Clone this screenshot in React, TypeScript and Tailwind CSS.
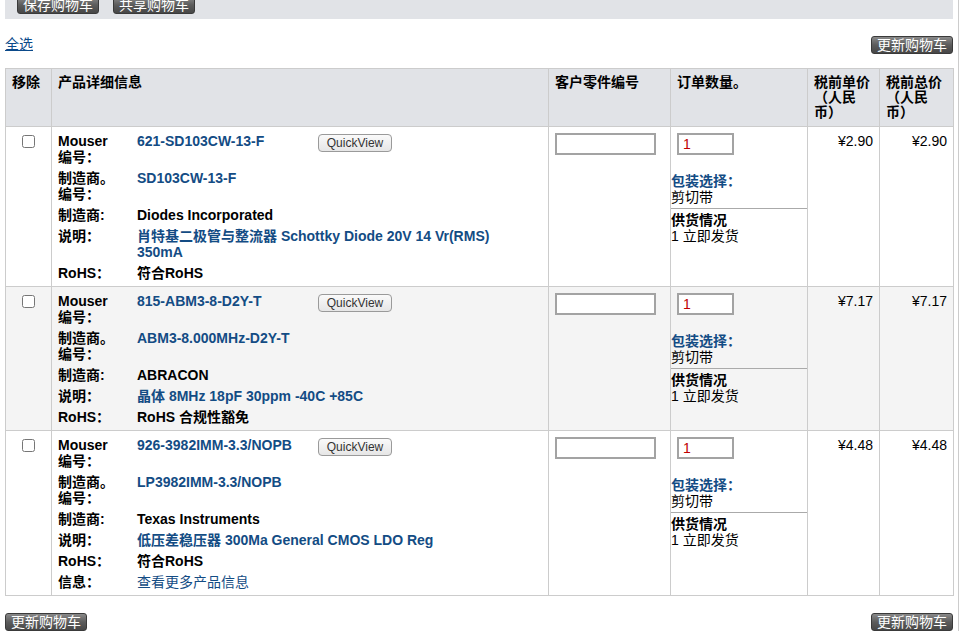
import type { ReactNode } from 'react';

type Item = { label: ReactNode; value: ReactNode; kind?: 'link' | 'plain' };

type Product = {
  id: string;
  mouser: string;
  mfrNo: string;
  mfr: string;
  desc: string;
  rohs: string;
  more?: boolean;
  price: string;
  shaded?: boolean;
};

const products: Product[] = [
  {
    id: 'a',
    mouser: '621-SD103CW-13-F',
    mfrNo: 'SD103CW-13-F',
    mfr: 'Diodes Incorporated',
    desc: '肖特基二极管与整流器 Schottky Diode 20V 14 Vr(RMS) 350mA',
    rohs: '符合RoHS',
    price: '¥2.90',
  },
  {
    id: 'b',
    mouser: '815-ABM3-8-D2Y-T',
    mfrNo: 'ABM3-8.000MHz-D2Y-T',
    mfr: 'ABRACON',
    desc: '晶体 8MHz 18pF 30ppm -40C +85C',
    rohs: 'RoHS 合规性豁免',
    price: '¥7.17',
    shaded: true,
  },
  {
    id: 'c',
    mouser: '926-3982IMM-3.3/NOPB',
    mfrNo: 'LP3982IMM-3.3/NOPB',
    mfr: 'Texas Instruments',
    desc: '低压差稳压器 300Ma General CMOS LDO Reg',
    rohs: '符合RoHS',
    more: true,
    price: '¥4.48',
  },
];

const font = "font-['Liberation_Sans','Noto_Sans_CJK_SC',sans-serif]";

function DarkButton({ children }: { children: ReactNode }) {
  return (
    <button className="h-[18px] w-[82px] rounded-[3px] border border-[#3a3a3a] bg-gradient-to-b from-[#8a8a8a] via-[#5c5c5c] to-[#474747] text-[14px] leading-[16px] text-white">
      {children}
    </button>
  );
}

function Detail({ label, value, kind }: Item) {
  const color = kind === 'link' ? 'text-[#134c84]' : 'text-black';
  return (
    <div className="flex">
      <div className="w-[79px] shrink-0 font-bold text-black">{label}</div>
      <div className={`w-[362px] font-bold ${color}`}>{value}</div>
    </div>
  );
}

function ProductRow({ p }: { p: Product }) {
  const bg = p.shaded ? 'bg-[#f4f4f4]' : 'bg-white';
  const td = 'border border-[#cccccc] align-top';
  return (
    <tr className={bg}>
      <td className={`${td} pt-[6px] text-center`}>
        <input type="checkbox" className="mt-[1px] h-[13px] w-[13px] accent-[#ddd]" />
      </td>
      <td className={`${td} px-[6px] pt-[6px] pb-[5px]`}>
        <div className="flex flex-col gap-[5px] text-[14px] leading-[16px]">
          <div className="flex">
            <div className="w-[79px] shrink-0 font-bold text-black">
              Mouser
              <br />
              编号：
            </div>
            <div className="w-[181px] font-bold text-[#134c84]">{p.mouser}</div>
            <button className="mt-[1px] h-[18px] w-[74px] rounded-[4px] border border-[#9a9a9a] bg-gradient-to-b from-[#fafafa] to-[#e6e6e6] text-[12px] leading-[14px] font-normal text-[#333]">
              QuickView
            </button>
          </div>
          <Detail
            label={
              <>
                制造商。
                <br />
                编号：
              </>
            }
            value={p.mfrNo}
            kind="link"
          />
          <Detail label="制造商:" value={p.mfr} />
          <Detail label="说明：" value={p.desc} kind="link" />
          <Detail label="RoHS：" value={p.rohs} />
          {p.more && (
            <div className="flex">
              <div className="w-[79px] shrink-0 font-bold text-black">信息：</div>
              <a className="font-normal text-[#134c84]">查看更多产品信息</a>
            </div>
          )}
        </div>
      </td>
      <td className={`${td} px-[6px] pt-[6px]`}>
        <input
          type="text"
          className="box-border h-[22px] w-[101px] border-2 border-[#a3a3a3] bg-white"
        />
      </td>
      <td className={`${td} pt-[6px]`}>
        <input
          type="text"
          defaultValue="1"
          className="ml-[6px] box-border h-[22px] w-[57px] border-2 border-[#a3a3a3] bg-white px-[4px] text-[14px] text-[#c00000]"
        />
        <div className="mt-[18px] text-[14px] leading-[16px]">
          <div className="font-bold text-[#134c84]">包装选择：</div>
          <div className="text-black">剪切带</div>
          <div className="mt-[3px] border-t border-[#aaaaaa] pt-[3px] font-bold text-black">
            供货情况
          </div>
          <div className="leading-[17px] text-black">1 立即发货</div>
        </div>
      </td>
      <td className={`${td} pr-[6px] pt-[6px] text-right text-[14px] leading-[16px] text-black`}>
        {p.price}
      </td>
      <td className={`${td} pr-[6px] pt-[6px] text-right text-[14px] leading-[16px] text-black`}>
        {p.price}
      </td>
    </tr>
  );
}

export default function App() {
  const th = 'border border-[#cccccc] px-[6px] pt-[6px] pb-[6px] text-left align-top font-bold';
  return (
    <div className={`${font} min-h-[631px] w-[959px] border-r border-[#cccccc] bg-white px-[5px] text-[14px] text-black`}>
      <div className="flex h-[19px] items-start gap-[14px] overflow-hidden bg-[#e1e3e7] pl-[12px]">
        <div className="-mt-[5px]">
          <DarkButton>保存购物车</DarkButton>
        </div>
        <div className="-mt-[5px]">
          <DarkButton>共享购物车</DarkButton>
        </div>
      </div>

      <div className="mt-[17px] flex h-[17px] items-center justify-between">
        <a className="text-[14px] leading-[17px] text-[#0b4a8a] underline">全选</a>
        <DarkButton>更新购物车</DarkButton>
      </div>

      <table className="mt-[15px] w-[948px] table-fixed border-collapse text-[14px]">
        <colgroup>
          <col className="w-[46px]" />
          <col className="w-[497px]" />
          <col className="w-[122px]" />
          <col className="w-[137px]" />
          <col className="w-[72px]" />
          <col className="w-[74px]" />
        </colgroup>
        <thead>
          <tr className="bg-[#e1e3e7] leading-[15px]">
            <th className={th}>移除</th>
            <th className={th}>产品详细信息</th>
            <th className={th}>客户零件编号</th>
            <th className={th}>订单数量。</th>
            <th className={th}>
              税前单价
              <br />
              （人民
              <br />
              币）
            </th>
            <th className={th}>
              税前总价
              <br />
              （人民
              <br />
              币）
            </th>
          </tr>
        </thead>
        <tbody>
          {products.map((p) => (
            <ProductRow key={p.id} p={p} />
          ))}
        </tbody>
      </table>

      <div className="mt-[17px] flex justify-between">
        <DarkButton>更新购物车</DarkButton>
        <DarkButton>更新购物车</DarkButton>
      </div>
    </div>
  );
}
